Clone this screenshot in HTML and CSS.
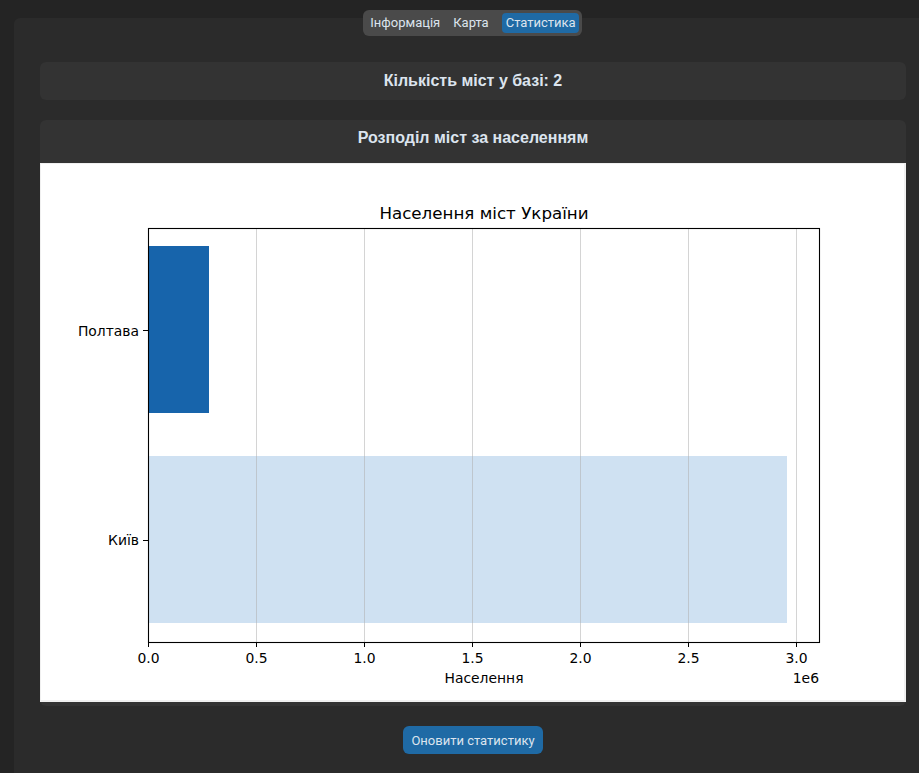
FILE: index.html
```html
<!DOCTYPE html>
<html lang="uk">
<head>
<meta charset="utf-8">
<link rel="stylesheet" href="styles.css">
</head>
<body>
<div class="app">
  <div class="tabs">
    <span class="tab">Інформація</span>
    <span class="tab">Карта</span>
    <span class="tab active">Статистика</span>
  </div>
  <div class="frame">
    <div class="card count">Кількість міст у базі: 2</div>
    <div class="card dist">
      <div class="dist-title">Розподіл міст за населенням</div>
      <div class="chart">
        <svg class="plot" width="864" height="536" viewBox="0 0 864 536">
          <text x="443" y="54.5" font-size="16.7" text-anchor="middle" fill="#000">Населення міст України</text>
          <rect x="107" y="82" width="61" height="167" fill="#1764ab"/>
          <rect x="107" y="292" width="639" height="167" fill="#cfe1f2"/>
          <g stroke="#b0b0b0" stroke-opacity="0.55" stroke-width="1">
            <line x1="215.5" y1="64" x2="215.5" y2="478"/>
            <line x1="323.5" y1="64" x2="323.5" y2="478"/>
            <line x1="431.5" y1="64" x2="431.5" y2="478"/>
            <line x1="539.5" y1="64" x2="539.5" y2="478"/>
            <line x1="647.5" y1="64" x2="647.5" y2="478"/>
            <line x1="755.5" y1="64" x2="755.5" y2="478"/>
          </g>
          <rect x="107.5" y="64.5" width="671" height="414" fill="none" stroke="#000" stroke-width="1.1"/>
          <g stroke="#000" stroke-width="1">
            <line x1="107.5" y1="478" x2="107.5" y2="483"/>
            <line x1="215.5" y1="478" x2="215.5" y2="483"/>
            <line x1="323.5" y1="478" x2="323.5" y2="483"/>
            <line x1="431.5" y1="478" x2="431.5" y2="483"/>
            <line x1="539.5" y1="478" x2="539.5" y2="483"/>
            <line x1="647.5" y1="478" x2="647.5" y2="483"/>
            <line x1="755.5" y1="478" x2="755.5" y2="483"/>
            <line x1="102" y1="166.5" x2="107" y2="166.5"/>
            <line x1="102" y1="376.5" x2="107" y2="376.5"/>
          </g>
          <g font-size="13.9" fill="#000" text-anchor="middle">
            <text x="107.5" y="499">0.0</text>
            <text x="215.5" y="499">0.5</text>
            <text x="323.5" y="499">1.0</text>
            <text x="431.5" y="499">1.5</text>
            <text x="539.5" y="499">2.0</text>
            <text x="647.5" y="499">2.5</text>
            <text x="755.5" y="499">3.0</text>
            <text x="443" y="519">Населення</text>
            <text x="778" y="519" text-anchor="end">1e6</text>
            <text x="98" y="171.5" text-anchor="end">Полтава</text>
            <text x="98" y="381" text-anchor="end">Київ</text>
          </g>
        </svg>
      </div>
    </div>
    <div class="actions">
      <button class="btn">Оновити статистику</button>
    </div>
  </div>
</div>
</body>
</html>
```
FILE: styles.css
```css
html, body {
  margin: 0;
  padding: 0;
  background: #242424;
  overflow: hidden;
  height: 100%;
}
.app {
  display: flex;
  flex-direction: column;
  align-items: flex-start;
  padding-top: 10px;
  font-family: Roboto, "Liberation Sans", sans-serif;
}
.tabs {
  align-self: center;
  position: relative;
  z-index: 2;
  display: flex;
  background: #4a4a4a;
  border-radius: 6px;
  padding: 3px;
  height: 20px;
  margin-left: 26px;
}
.tab {
  color: #dce4ee;
  font-size: 13px;
  line-height: 20px;
  padding: 0 4px;
  margin: 0 5px 0 0;
  border-radius: 4px;
}
.tab.active {
  background: #1f6aa5;
  margin-right: 0;
  margin-left: 4px;
  padding: 0 3px 0 4px;
}
.frame {
  box-sizing: border-box;
  margin-top: -18px;
  margin-left: 14px;
  width: 918px;
  height: 755px;
  padding: 44px 26px 0 26px;
  background: #2b2b2b;
  border-radius: 6px 6px 0 0;
  display: flex;
  flex-direction: column;
}
.card {
  background: #333333;
  border-radius: 6px;
  color: #dce4ee;
  font-family: "Liberation Sans", Arial, sans-serif;
  font-weight: bold;
  font-size: 16px;
  text-align: center;
}
.count {
  height: 38px;
  line-height: 38px;
}
.dist {
  margin-top: 20px;
  padding-bottom: 4px;
}
.dist-title {
  height: 43px;
  line-height: 36px;
}
.chart {
  background: #ffffff;
  border: 1px solid #f0f0f0;
  border-width: 1px 2px 2px 1px;
  height: 536px;
  width: 863px;
  line-height: 0;
}
.plot {
  display: block;
  font-family: "DejaVu Sans", sans-serif;
  font-weight: normal;
}
.actions {
  display: flex;
  justify-content: center;
  padding-top: 20px;
}
.btn {
  background: #1f6aa5;
  color: #dce4ee;
  border: none;
  border-radius: 6px;
  font-family: Roboto, "Liberation Sans", sans-serif;
  font-weight: normal;
  font-size: 13px;
  height: 28px;
  padding: 0 8px;
}
```
